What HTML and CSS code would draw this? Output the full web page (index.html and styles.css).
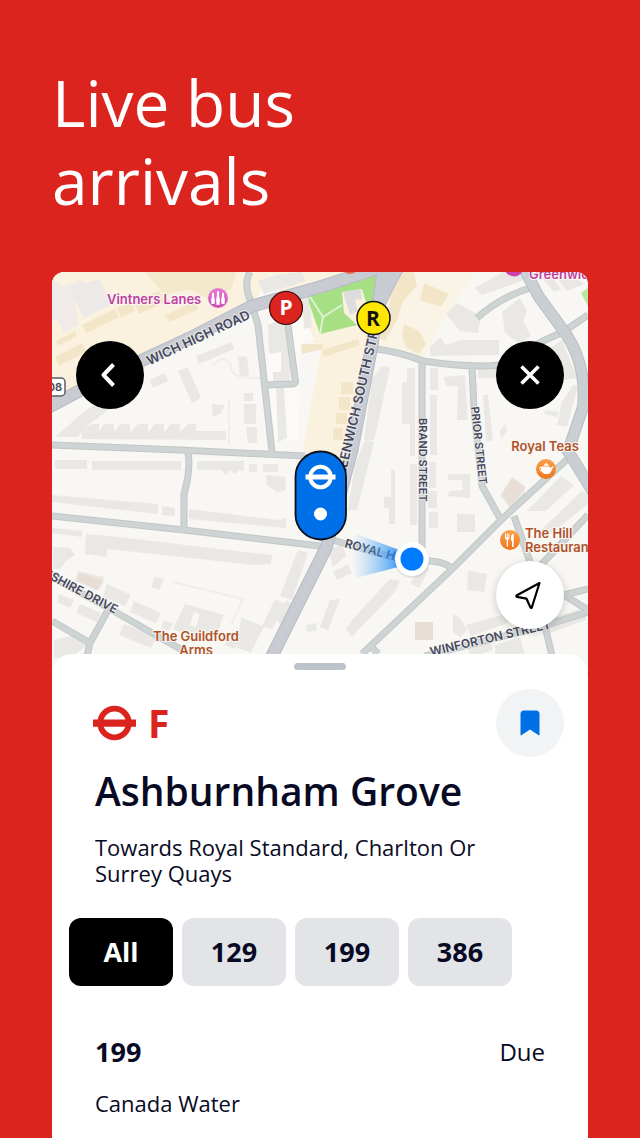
FILE: index.html
```html
<!DOCTYPE html>
<html lang="en">
<head>
<meta charset="utf-8">
<meta name="viewport" content="width=device-width, initial-scale=1">
<title>Live bus arrivals</title>
<link rel="stylesheet" href="styles.css">
</head>
<body>
<main class="promo">
  <h1 class="headline">Live bus<br>arrivals</h1>
  <div class="phone">
    <section class="map" aria-label="Map">
      <svg class="map-canvas" viewBox="52 272 536 400" preserveAspectRatio="xMidYMin slice">
        <defs>
          <linearGradient id="beam" x1="1" y1="0" x2="0" y2="0">
            <stop offset="0" stop-color="#0a80f5"/>
            <stop offset="1" stop-color="#6db8fa" stop-opacity="0"/>
          </linearGradient>
          <linearGradient id="orange" x1="0" y1="0" x2="0" y2="1">
            <stop offset="0" stop-color="#fba04d"/>
            <stop offset="1" stop-color="#f0761b"/>
          </linearGradient>
          <linearGradient id="pink" x1="0" y1="0" x2="0" y2="1">
            <stop offset="0" stop-color="#e57bd2"/>
            <stop offset="1" stop-color="#cf4fb7"/>
          </linearGradient>
        </defs>
        <rect x="52" y="272" width="536" height="400" fill="#f8f7f3"/>
        <!-- districts -->
        <path fill="#faf2df" d="M52 272H395L378 345 345 480 325 452H303L312 400 322 344 299 340 272 272 250 309 52 400Z"/>
        <path fill="#faf4e6" d="M395 272H475L440 325 425 358 378 348Z"/>
        <path fill="#f0ebe9" d="M52 278L62 287 82 279 87 292 74 300 79 325 64 333 57 319 52 322Z"/>
        <path fill="#ece9e8" d="M68 288L100 279 111 305 84 318Z"/>
        <path fill="#f3e8cc" d="M145 272H236L232 288 210 300 190 289 165 295Z"/>
        <g fill="#f3e6c8">
          <path d="M82 325L115 309 119 317 86 333ZM117 308L131 301 135 311 121 318ZM134 300L160 291 165 302 139 314ZM55 357L82 343 86 352 59 366ZM56 341L75 331 77 336 58 346ZM165 316L194 301 198 309 170 322Z"/>
          <path d="M301 344H323V349L302 354ZM322 350L358 339 360 345 324 357ZM341 382H353V394H341ZM339 397H350V410H339ZM336 413H347V424H336ZM333 428H343V440H333Z"/>
          <path d="M394 272H414L417 286 403 301 397 320 385 341 377 337 389 307ZM404 324L419 331 426 344 419 354 407 348 402 336ZM424 283L449 294 441 307 420 300Z"/>
        </g>
        <path fill="#fbfaf7" d="M268 322L300 306 314 340 300 345 298 440H276L268 385Z"/>
        <path fill="#a6df84" d="M304 289L376 274 380 296 367 306 362 289 342 292 344 313 357 325 320 334Z"/>
        <path d="M307 292L323 317 320 334M323 317L342 305" fill="none" stroke="#dff1d3" stroke-width="2"/>
        <path fill="#dedddd" d="M343 292L361 289 362 299 355 300 358 311 350 315Z"/>
        <path fill="#b9e69c" d="M588 288L581 293 588 306Z"/>

        <!-- buildings -->
        <g fill="#e9e8e5">
          <path d="M258 281L276 275 301 272 306 281 264 294ZM302 295L308 293 312 327 304 329ZM268 325L284 318 291 335 290 384H273V372H281V352L269 354Z"/>
          <path d="M196 356L232 342 234 349 199 364ZM238 357L247 356 249 376 240 377ZM178 371L188 367 201 398 192 403ZM150 380L165 373 168 381 153 388ZM212 404L225 405 220 414 213 417Z"/>
          <path d="M244 393H253V401H244ZM244 404H256V424H244ZM246 427H257V443H248ZM276 388H284L287 438 278 442Z"/>
          <path d="M55 437L86 410 125 386 133 392 88 425 78 437ZM82 431L92 424H99V432L104 424H114V432L120 424H130V432L138 424H148V432L155 424H164V432L171 424H180V432L188 424H196V431H226V440L82 439Z"/>
          <path d="M55 460H87V469H55ZM92 461H181V470H92ZM197 461H244V471L239 470 235 474 230 470 226 475 222 470H197ZM249 464H257V472H249ZM263 464H278V472H263ZM266 475L285 477 286 490 277 492 267 485ZM52 495L158 504V514L52 502ZM162 506L175 508V516L162 515ZM189 509L278 520 286 518V528L189 519Z"/>
          <path d="M52 528L82 531V537L52 533ZM86 534L109 536 272 555 271 564 252 565 200 559 107 549V557L85 554ZM53 547L70 548 75 555 66 561 60 569H53Z"/>
          <path d="M78 571L104 577 103 584 98 591 75 581ZM107 584L131 595 125 606 103 597ZM134 601L161 613 156 623 130 612ZM59 594L74 600 70 608 57 602ZM80 604L101 613 97 622 76 613ZM124 624L157 637 151 648 119 635ZM155 577L164 579 159 590 151 587ZM164 620L173 624 169 631 161 628ZM241 617L264 627 251 652 237 648ZM231 634L240 638 235 649 225 645Z"/>
          <path fill-rule="evenodd" d="M185 604L224 615 217 633 190 637 173 629ZM194 612L200 614 196 627 190 625Z"/>
          <path d="M298 550L308 553 292 600 280 596ZM275 599L285 604 272 629 262 626ZM306 625L316 623 317 630 307 632ZM276 620L286 600 292 604 282 626Z"/>
          <path d="M328 550L342 544 346 556 333 567ZM333 572L348 564 352 573 337 580ZM330 600L340 599 328 630 320 627ZM352 620L390 579 400 581 394 593 358 630 352 637 346 629ZM372 378L382 366 390 367 381 410 374 440 364 440ZM355 465L365 440 374 442 367 470 357 510 348 510ZM384 497H391V470H395V524H389V508H384Z"/>
          <path d="M407 368H415V456H410V424H402V382H407ZM410 464H417V525H410ZM430 368H438V390H430ZM430 395H437V455H430ZM429 462H436V488H429ZM428 491H437V508H428ZM429 512H438V528H429ZM415 555L425 550 429 570 419 588 410 583 420 569ZM444 377L465 375 468 420H457L458 386H446ZM483 395H488L493 440 486 442Z"/>
          <path d="M448 474H470V498L448 496 449 491 463 490 462 480H448ZM457 514H475V532H457ZM468 571L487 574 484 592 467 590ZM453 614L460 618 467 630 460 637 453 632ZM466 625L506 614 511 622 471 636Z"/>
          <path d="M475 288L503 272H523L522 281 482 295ZM502 312L520 298 527 311 523 321 531 336 519 343 505 333ZM430 347L440 337 446 345 460 340H499V355L430 356ZM478 365L510 368 503 378H478ZM446 314L457 303 481 316 478 333 460 331ZM556 277L568 272 584 284 567 291ZM542 278L551 275 561 289 554 292ZM547 350L562 340 577 378 558 381ZM562 402L573 385 578 386 567 427 557 425ZM545 410L559 412 557 417 544 414ZM500 431L505 424 507 431 501 439ZM500 495L512 477 525 486 525 500 511 510ZM527 511L561 476 574 485 546 511ZM541 530L582 491 588 494V504L545 538ZM566 440L576 442 569 456 560 451Z"/>
          <path d="M545 620L586 607V620L548 634ZM495 645L520 637 525 655 495 658ZM468 646L490 639 493 650 470 658ZM54 640L75 635 87 645 70 658H54Z"/>
        </g>
        <g fill="#e9ded6">
          <path d="M80 573L103 580 98 590 76 580Z"/>
          <path d="M415 622H433V640H415Z"/>
          <path d="M502 494L512 478 525 487 511 507Z"/>
        </g>
        <path d="M173 582L243 599 231 625M229 400V445M213 365Q225 353 231 366Q229 379 260 378" fill="none" stroke="#efeeea" stroke-width="2"/>

        <!-- street casings, then fills -->
        <path class="street-edge" d="M250 272Q243 284 251 302L258 325 272 452M266 385L292 384Q297 384 295 378L288 325M52 445L180 450 305 456M188 452Q191 470 184 494V530M52 516L184 530 320 546M376 349Q400 352 423 361Q470 368 500 365L543 341 563 332 588 315M422 362V556M472 367L474 410 482 486 501 520M477 318Q500 297 533 287M362 654L450 571 501 520 574 453M332 540L350 545 395 558 430 561Q447 562 453 570M514 516L530 562 552 656M588 515L540 566M564 595L588 589M564 595L588 610M425 656L540 627 588 612M52 577L112 610 182 650M52 621L90 643 108 610M90 643L87 656M370 645L378 654"/>
        <path class="street" d="M250 272Q243 284 251 302L258 325 272 452M266 385L292 384Q297 384 295 378L288 325M52 445L180 450 305 456M188 452Q191 470 184 494V530M52 516L184 530 320 546M376 349Q400 352 423 361Q470 368 500 365L543 341 563 332 588 315M422 362V556M472 367L474 410 482 486 501 520M477 318Q500 297 533 287M362 654L450 571 501 520 574 453M332 540L350 545 395 558 430 561Q447 562 453 570M514 516L530 562 552 656M588 515L540 566M564 595L588 589M564 595L588 610M425 656L540 627 588 612M52 577L112 610 182 650M52 621L90 643 108 610M90 643L87 656M370 645L378 654"/>
        <path class="avenue-edge" d="M522 265L539 297 566 334Q587 366 583 407L568 451 593 492"/>
        <path class="avenue" d="M522 265L539 297 566 334Q587 366 583 407L568 451 593 492"/>
        <path class="main-edge" d="M45 409L100 380 190 338 252 306 320 287 385 266M399 266Q388 284 377 309L372 345 352 450 326 548 270 660M384 266L378 306"/>
        <path class="main" d="M45 409L100 380 190 338 252 306 320 287 385 266M399 266Q388 284 377 309L372 345 352 450 326 548 270 660M384 266L378 306"/>

        <!-- street names -->
        <g class="street-name">
          <text class="name-lg" text-anchor="end" transform="translate(251 318) rotate(-25)">WICH HIGH ROAD</text>
          <text class="name-lg" text-anchor="end" transform="translate(384 308) rotate(-77)">GREENWICH SOUTH STREET</text>
          <text class="name-sm" transform="translate(419 418) rotate(90)">BRAND STREET</text>
          <text class="name-sm" transform="translate(471 407) rotate(84)">PRIOR STREET</text>
          <text class="name-md" transform="translate(344 547) rotate(15)">ROYAL HILL</text>
          <text class="name-md" transform="translate(431 656) rotate(-13)">WINFORTON STREET</text>
          <text class="name-md" text-anchor="end" transform="translate(115 614) rotate(28)">NSHIRE DRIVE</text>
        </g>

        <!-- places -->
        <rect x="36" y="378" width="29" height="18" rx="4" fill="#fff" stroke="#5c5d66" stroke-width="1.5"/>
        <text class="road-number" x="62" y="391" text-anchor="end">08</text>
        <g class="place-pink">
          <text x="107" y="304">Vintners Lanes</text>
          <text x="529" y="279">Greenwich</text>
        </g>
        <circle cx="218" cy="298" r="10" fill="url(#pink)"/>
        <path fill="#fff" d="M213 292.500q1.500 0 1 3.500 1.500 4 .5 8h-3q-1-4 .5-8-.5-3.500 1-3.500ZM218 291q1.500 0 1 4 1.500 5 .5 10h-3q-1-5 .5-10-.5-4 1-4ZM223 292.500q1.500 0 1 3.500 1.500 4 .5 8h-3q-1-4 .5-8-.5-3.500 1-3.500Z"/>
        <circle cx="514" cy="267" r="9.500" fill="#cf3fae"/>
        <circle cx="350" cy="265" r="9" fill="#e86a4a"/>
        <g class="place-brown">
          <text x="545" y="451" text-anchor="middle">Royal Teas</text>
          <text x="525" y="538">The Hill</text>
          <text x="525" y="552">Restaurant</text>
          <text x="196" y="641" text-anchor="middle">The Guildford</text>
          <text x="196" y="655" text-anchor="middle">Arms</text>
        </g>
        <circle cx="546" cy="469" r="10" fill="url(#orange)"/>
        <path fill="#fff" d="M543 466.500h6.500l1.200 1.500 2.300-2q.8.500 0 1.500l-2 4q-1 2.500-3 2.500h-3.500q-1.800-.5-2.500-2.200-2.700-.8-2.700-3.300t3.700-2ZM541 468q-1.300 0-1.200 1 .2 1 1.400 1.400ZM543.700 465.700q.3-1.400 1.800-1.700 0-1.200.8-1.200t.8 1.200q1.500.3 1.800 1.700Z"/>
        <circle cx="510" cy="540" r="10" fill="url(#orange)"/>
        <path fill="#fff" d="M505 533.500h1v4h.7v-4h1v4h.7v-4h1v5l-1.400 1.500v6.500h-1.300V540l-1.700-1.500ZM512 547v-6l-1-1q-.5-6 2.700-6.500V547Z"/>

        <!-- heading beam and current location -->
        <path d="M402 551L356 534Q347 557 356 578L402 566Z" fill="url(#beam)" opacity=".85"/>
        <circle cx="412" cy="560" r="18" fill="#000" opacity=".08"/>
        <circle cx="412" cy="559" r="17" fill="#fff"/>
        <circle cx="412" cy="559" r="11.500" fill="#007aff"/>

        <!-- bus stops -->
        <circle cx="286" cy="308" r="16.500" fill="#dc241f" stroke="#3a0c0b" stroke-width="1.200"/>
        <text class="stop-letter stop-light" x="286" y="315" text-anchor="middle">P</text>
        <circle cx="373.500" cy="318" r="16.500" fill="#ffe600" stroke="#111" stroke-width="1.500"/>
        <text class="stop-letter" x="373" y="326" text-anchor="middle">R</text>
        <rect x="295.500" y="451.500" width="50.500" height="88" rx="25" fill="#0070e8" stroke="#0b0f18" stroke-width="1.800"/>
        <circle cx="320.500" cy="477" r="10.300" fill="none" stroke="#fff" stroke-width="4"/>
        <path d="M305.500 474.500h30v5h-30z" fill="#fff"/>
        <circle cx="320.500" cy="514" r="6.500" fill="#fff"/>
      </svg>
      <button class="round-btn dark back" aria-label="Back">
        <svg class="glyph" viewBox="0 0 34 34"><path d="M20.500 6.500L10.500 17l10 10.500" fill="none" stroke="#fff" stroke-width="4" stroke-linejoin="round"/></svg>
      </button>
      <button class="round-btn dark close" aria-label="Close">
        <svg class="glyph" viewBox="0 0 34 34"><path d="M8.500 8.500l17 17M25.500 8.500l-17 17" fill="none" stroke="#fff" stroke-width="3.600"/></svg>
      </button>
      <button class="round-btn locate" aria-label="My location">
        <svg class="glyph" viewBox="0 0 34 34"><path d="M26.500 5L3.500 17.500Q3 18.500 4 18.800L13.500 20.700 17.500 29.500Q18.200 30.300 18.800 29.500Z" fill="none" stroke="#000" stroke-width="2.200" stroke-linejoin="round"/></svg>
      </button>
    </section>
    <section class="sheet">
      <div class="handle"></div>
      <header class="stop-head">
        <svg class="roundel" viewBox="0 0 43 36"><circle cx="21.500" cy="18" r="14.300" fill="none" stroke="#dc241f" stroke-width="5.800"/><path d="M0 14.500h43v7.200H0z" fill="#dc241f"/></svg>
        <span class="stop-code">F</span>
        <button class="round-btn save" aria-label="Save stop">
          <svg class="glyph" viewBox="0 0 34 34"><path d="M7.500 8q0-3.500 3.500-3.500h12q3.500 0 3.500 3.500v20.500q0 1.500-1.200.6L17 23.500l-8.300 5.600q-1.200.9-1.200-.6Z" fill="#0070e8"/></svg>
        </button>
      </header>
      <h2 class="stop-name">Ashburnham Grove</h2>
      <p class="towards">Towards Royal Standard, Charlton Or Surrey Quays</p>
      <nav class="routes" aria-label="Routes">
        <button class="chip active" aria-pressed="true">All</button>
        <button class="chip" aria-pressed="false">129</button>
        <button class="chip" aria-pressed="false">199</button>
        <button class="chip" aria-pressed="false">386</button>
      </nav>
      <article class="arrival">
        <h3 class="route">199</h3>
        <span class="due">Due</span>
        <p class="destination">Canada Water</p>
      </article>
    </section>
  </div>
</main>
</body>
</html>
```
FILE: styles.css
```css
* { box-sizing: border-box; }

body {
  margin: 0;
  background: #dc241f;
  color: #080a24;
  font-family: "Open Sans", "Noto Sans", sans-serif;
}

h1, h2, h3, p { margin: 0; }

button {
  border: 0;
  padding: 0;
  font-family: inherit;
  color: inherit;
  cursor: pointer;
}

.promo {
  min-height: 100vh;
  padding: 64px 52px 0;
  display: flex;
  flex-direction: column;
  gap: 52px;
}

.headline {
  color: #fff;
  font-size: 64px;
  line-height: 78px;
  font-weight: 400;
}

.phone {
  flex: 1;
  display: flex;
  flex-direction: column;
  border-radius: 12px 12px 0 0;
  overflow: hidden;
}

.map { position: relative; }

.map-canvas {
  display: block;
  width: 100%;
  height: 400px;
}

.street, .street-edge, .avenue, .avenue-edge, .main, .main-edge {
  fill: none;
  stroke-linejoin: round;
}
.street-edge { stroke: #c1c7c7; stroke-width: 7; }
.street { stroke: #ced4d3; stroke-width: 5; }
.avenue-edge { stroke: #b9bfc2; stroke-width: 12; }
.avenue { stroke: #c9cfd2; stroke-width: 10; }
.main-edge { stroke: #b7bac4; stroke-width: 13; }
.main { stroke: #c9cbd3; stroke-width: 11; }

.street-name, .place-pink, .place-brown, .road-number {
  font-family: Inter, "Liberation Sans", sans-serif;
  font-weight: 600;
  paint-order: stroke;
  stroke: #f8f7f3;
  stroke-width: 2px;
}
.street-name { fill: #45485c; stroke-opacity: .6; }
.name-lg { font-size: 13px; }
.name-md { font-size: 12px; }
.name-sm { font-size: 11px; }
.road-number { font-size: 11px; fill: #45485c; }
.place-pink { font-size: 13px; fill: #c1419f; }
.place-brown { font-size: 13px; fill: #b0532a; }
.stop-letter { font-size: 21px; font-weight: 700; fill: #111; }
.stop-light { fill: #fff; }

.round-btn {
  width: 68px;
  height: 68px;
  border-radius: 50%;
  display: grid;
  place-items: center;
}
.glyph { width: 34px; height: 34px; }
.dark { background: #000; }
.back, .close, .locate { position: absolute; }
.back { left: 24px; top: 69px; }
.close { right: 24px; top: 69px; }
.locate {
  right: 24px;
  top: 289px;
  background: #fff;
  box-shadow: 0 2px 8px rgba(0, 0, 0, .2);
}

.sheet {
  position: relative;
  flex: 1;
  margin-top: -18px;
  padding: 9px 24px 20px 43px;
  border-radius: 20px 20px 0 0;
  background: #fff;
}

.handle {
  width: 52px;
  height: 7px;
  margin: 0 auto;
  border-radius: 4px;
  background: #bdc3ca;
  transform: translateX(-10px);
}

.stop-head {
  display: flex;
  align-items: center;
  gap: 12px;
  margin-top: 19px;
}
.roundel { width: 43px; height: 36px; margin-left: -2px; }
.stop-code {
  color: #dc241f;
  font-size: 39px;
  line-height: 48px;
  font-weight: 700;
}
.save { margin-left: auto; background: #f1f3f5; }

.stop-name {
  margin-top: 10px;
  font-size: 39px;
  line-height: 48px;
  font-weight: 600;
}

.towards {
  max-width: 420px;
  margin-top: 19px;
  font-size: 22px;
  line-height: 26px;
}

.routes {
  display: flex;
  gap: 9px;
  margin: 32px 0 0 -26px;
}
.chip {
  width: 104px;
  height: 68px;
  border-radius: 12px;
  background: #e2e4e8;
  font-size: 27px;
  line-height: 36px;
  font-weight: 700;
}
.chip.active { background: #000; color: #fff; }

.arrival {
  display: grid;
  grid-template-columns: 1fr auto;
  align-items: center;
  row-gap: 20px;
  margin-top: 48px;
  padding-right: 19px;
}
.route { font-size: 27px; line-height: 36px; font-weight: 700; }
.due { font-size: 24px; line-height: 32px; }
.destination { grid-column: 1 / -1; font-size: 22px; line-height: 26px; }
```
